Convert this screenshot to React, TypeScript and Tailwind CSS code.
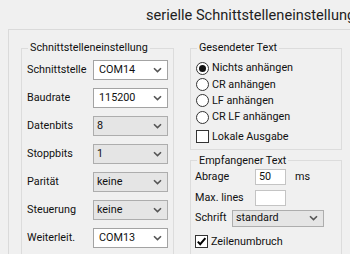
import React from "react";

const font = "font-['Segoe_UI','Roboto',sans-serif]";

const Chevron = () => (
  <svg width="9" height="6" viewBox="0 0 9 6" className="shrink-0">
    <path d="M1 1.2 L4.5 4.6 L8 1.2" fill="none" stroke="#555" strokeWidth="1.6" />
  </svg>
);

const Combo = ({ value, white }: { value: string; white?: boolean }) => (
  <div
    className={
      white
        ? "flex h-[20px] items-center justify-between border border-[#a3a3a3] bg-white pl-[5px] pr-[5px]"
        : "flex h-[20px] items-center justify-between border border-[#adadad] bg-[#e5e5e5] pl-[3px] pr-[5px]"
    }
  >
    <span>{value}</span>
    <Chevron />
  </div>
);

const Radio = ({ label, checked }: { label: string; checked?: boolean }) => (
  <div className="flex h-[16.4px] items-center gap-[3px]">
    <div className="flex h-[13px] w-[13px] items-center justify-center rounded-full border border-[#333] bg-white">
      {checked && <div className="h-[7px] w-[7px] rounded-full bg-[#111]" />}
    </div>
    <span>{label}</span>
  </div>
);

const Check = ({ label, checked }: { label: string; checked?: boolean }) => (
  <div className="flex h-[16px] items-center gap-[3px]">
    <div className="flex h-[13px] w-[13px] items-center justify-center border border-[#333] bg-white">
      {checked && (
        <svg width="11" height="11" viewBox="0 0 11 11">
          <path d="M1.8 5.6 L4.2 8.2 L9.4 2.2" fill="none" stroke="#000" strokeWidth="2" />
        </svg>
      )}
    </div>
    <span>{label}</span>
  </div>
);

const rows: [string, string, boolean][] = [
  ["Schnittstelle", "COM14", true],
  ["Baudrate", "115200", true],
  ["Datenbits", "8", false],
  ["Stoppbits", "1", false],
  ["Parität", "keine", false],
  ["Steuerung", "keine", false],
  ["Weiterleit.", "COM13", true],
];

export default function App() {
  return (
    <div className={`h-[254px] w-[350px] overflow-hidden bg-[#f0f0f0] text-[10.8px] leading-[16px] text-[#111] ${font}`}>
      <div className="flex h-[29px] items-center whitespace-nowrap pl-[146px] text-[14.6px] text-[#1e1e1e]">
        serielle Schnittstelleneinstellung
      </div>
      <div className="ml-[8px] flex gap-[16px] border-l border-t border-[#dadada] pl-[12px] pt-[10px]">
        <fieldset className="w-[153px] shrink-0 border border-[#dcdcdc] pb-[20px] pl-[5px] pr-[5px]">
          <legend className="ml-[1px] px-[2px]">Schnittstelleneinstellung</legend>
          <div className="mt-[4px] grid gap-[8px]">
            {rows.map(([label, value, white]) => (
              <div key={label} className="grid grid-cols-[66px_75px] items-center">
                <span>{label}</span>
                <Combo value={value} white={white} />
              </div>
            ))}
          </div>
        </fieldset>
        <div className="flex w-[152px] shrink-0 flex-col">
          <fieldset className="border border-[#dcdcdc] pb-[4px] pl-[5px]">
            <legend className="ml-[1px] px-[2px]">Gesendeter Text</legend>
            <div className="mt-[4px] flex flex-col">
              <Radio label="Nichts anhängen" checked />
              <Radio label="CR anhängen" />
              <Radio label="LF anhängen" />
              <Radio label="CR LF anhängen" />
            </div>
            <div className="mt-[3px]">
              <Check label="Lokale Ausgabe" />
            </div>
          </fieldset>
          <fieldset className="mt-[3px] border border-[#dcdcdc] pb-[4px] pl-[4px]">
            <legend className="ml-[2px] px-[2px]">Empfangener Text</legend>
            <div className="flex flex-col">
              <div className="flex h-[16px] items-center">
                <span className="w-[60px]">Abrage</span>
                <div className="flex h-[16px] w-[31px] items-center border border-[#c4c4c4] bg-white pl-[3px]">50</div>
                <span className="ml-[9px]">ms</span>
              </div>
              <div className="mt-[5px] flex h-[16px] items-center">
                <span className="w-[60px]">Max. lines</span>
                <div className="h-[16px] w-[31px] border border-[#c4c4c4] bg-white" />
              </div>
              <div className="mt-[4px] flex h-[17px] items-center">
                <span className="w-[37px]">Schrift</span>
                <div className="flex h-[17px] w-[92px] items-center justify-between border border-[#adadad] bg-[#e5e5e5] pl-[3px] pr-[5px]">
                  <span>standard</span>
                  <Chevron />
                </div>
              </div>
              <div className="mt-[7px]">
                <Check label="Zeilenumbruch" checked />
              </div>
            </div>
          </fieldset>
        </div>
      </div>
    </div>
  );
}
